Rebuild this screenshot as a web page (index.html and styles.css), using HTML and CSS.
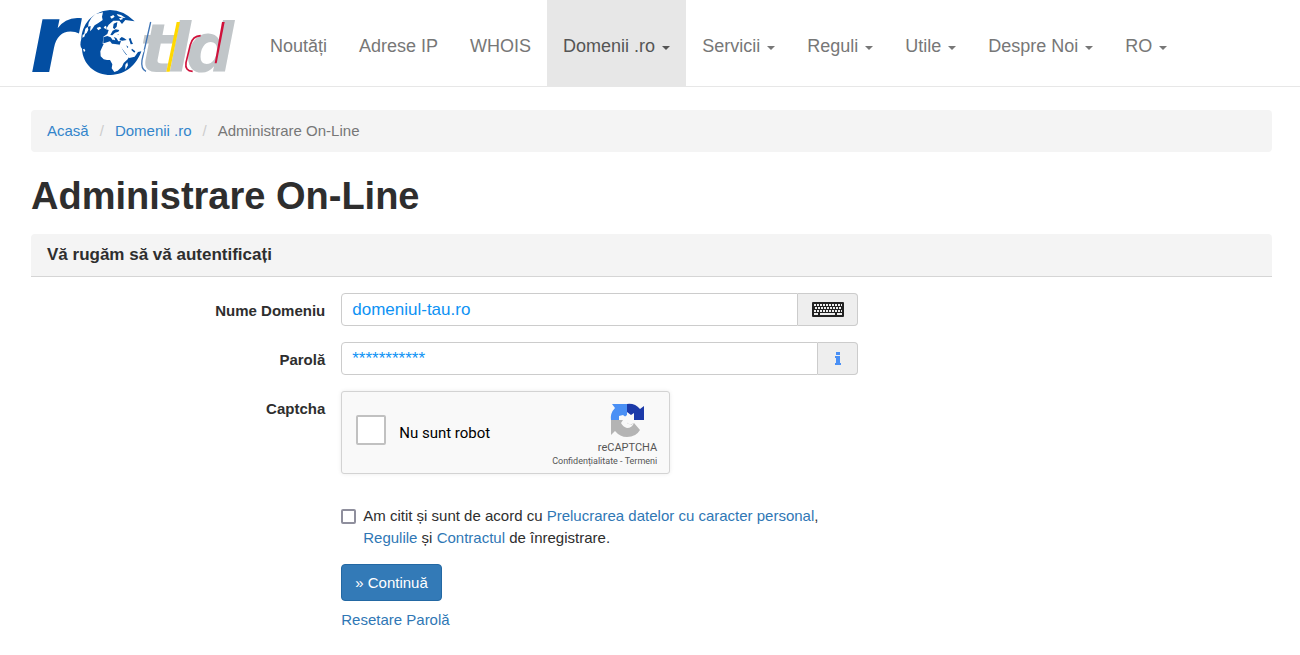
FILE: index.html
```html
<!DOCTYPE html>
<html lang="ro">
<head>
  <meta charset="UTF-8">
  <meta name="viewport" content="width=device-width, initial-scale=1">
  <title>Administrare On-Line</title>
  <link rel="stylesheet" href="styles.css">
</head>
<body>
  <nav class="navbar">
    <a class="brand" href="#" aria-label="rotld">
      <svg width="230" height="86" viewBox="0 0 690 258" aria-hidden="true">
        <g class="logo-text">
          <text x="28" y="215" font-size="290" fill="#034ea2">r</text>
          <text x="360 443 497" y="215" font-size="204" fill="#c1c6c9">tld</text>
        </g>
        <path d="M392 66L366 180Q362 208 378 214" fill="none" stroke="#3f74b5" stroke-width="4"/>
        <path d="M470 66h10l-31 149h-10z" fill="#ffd800"/>
        <path d="M542 107Q518 108 511 134L498 188Q494 213 518 214" fill="none" stroke="#d0103a" stroke-width="5"/>
        <path d="M606 66h8l-24 124h-6z" fill="#d0103a"/>
        <!-- globe -->
        <g transform="translate(174 18)">
          <path d="M96 12C40 16 12 58 10 98C6 112 6 122 12 128C14 176 52 207 98 207C144 206 174 176 190 142L176 152L158 132L166 118L188 106Q182 60 146 26Q122 12 96 12Z" fill="#fff" stroke="#fff" stroke-width="8"/>
          <path d="M96 12C40 16 12 58 10 98C6 112 6 122 12 128C14 176 52 207 98 207C144 206 176 176 190 136L180 138L170 152L154 156L140 138L124 118L94 112L74 114L76 92L88 84L92 72L84 70L92 56L106 44L124 44L132 54L142 42L170 46Q136 12 96 12Z" fill="#034ea2"/>
          <path d="M40 36L52 24L75 19L72 32L74 42L60 52L50 58L42 70L36 76L38 60L30 62L32 50ZM22 68l7-6l2 9l-5 10l-8 5ZM14 86l8-3l-3 9l-6 3ZM77 64l6-5l3 5l-4 6ZM56 66l10-4l4 5l-9 6Z" fill="#fff"/>
          <path d="M96 32l10-5l4 5l-9 6ZM116 24l13 3l14 9l-11-1l-12-5ZM123 37l9-2l3 4l-8 3Z" fill="#fff"/>
          <path d="M78 112L95 108L106 114L120 115L128 119L136 135L145 147L157 146L149 160L137 171L132 182L119 194L109 198L101 187L103 175L96 162L87 162L77 160L68 151L67 136L73 122Z" fill="#fff"/>
          <path d="M107 53L118 48L116 62L109 70L105 65ZM76 94l12-4l10 4l6 8l5-2l-2-7l8 3l6 10l8-1l-4 11l-13-2l-10-1l-6-7l-14 4l-6 2Z" fill="#034ea2"/>
          <path d="M104 74l9-4l11 2l-3 5l-10 3l-8 8l-6-1ZM125 98l6-5l7 3l8 6l-13 2l-8-1ZM152 98l6-2l3 10l4 8l-7 1l-3-9ZM145 118l6 5l-3 3ZM162 128l10 8l-3 4l-9-8ZM119 84l3 1l-2 3Z" fill="#034ea2"/>
          <path d="M104 92l5 3l3 8l-4-1l-5-6ZM142 176l6-7l2 9l-8 13ZM15 130l4-2l3 6l-4 4Z" fill="#fff"/>
        </g>
      </svg>
    </a>
    <ul class="menu">
      <li><a href="#">Noutăți</a></li>
      <li><a href="#">Adrese IP</a></li>
      <li><a href="#">WHOIS</a></li>
      <li><a class="active" href="#">Domenii .ro <span class="caret"></span></a></li>
      <li><a href="#">Servicii <span class="caret"></span></a></li>
      <li><a href="#">Reguli <span class="caret"></span></a></li>
      <li><a href="#">Utile <span class="caret"></span></a></li>
      <li><a href="#">Despre Noi <span class="caret"></span></a></li>
      <li><a href="#">RO <span class="caret"></span></a></li>
    </ul>
  </nav>

  <main class="container">
    <ol class="breadcrumb">
      <li><a href="#">Acasă</a></li>
      <li><a href="#">Domenii .ro</a></li>
      <li>Administrare On-Line</li>
    </ol>

    <h1>Administrare On-Line</h1>
    <h2>Vă rugăm să vă autentificați</h2>

    <form action="#" method="post">
      <div class="row">
        <label class="name" for="domain">Nume Domeniu</label>
        <div class="input-group">
          <input type="text" id="domain" name="domain" value="domeniul-tau.ro">
          <button class="addon addon-keyboard" type="button" aria-label="Tastatură">
            <svg width="32" height="15" viewBox="0 0 32 15" aria-hidden="true">
              <rect width="32" height="15" rx="1" fill="#222"/>
              <path d="M2 3h28M3 6h26M2 9h28" stroke="#eee" stroke-width="2" stroke-dasharray="2 1"/>
              <path d="M2 12h4M8 12h15M25 12h5" stroke="#eee" stroke-width="2"/>
            </svg>
          </button>
        </div>
      </div>

      <div class="row">
        <label class="name" for="password">Parolă</label>
        <div class="input-group">
          <input type="text" id="password" name="password" value="***********">
          <button class="addon addon-info" type="button" aria-label="Informații">
            <svg width="8" height="13" viewBox="0 0 8 13" aria-hidden="true">
              <path d="M2 0h4v3h-4zM1 4h5v7h1v2h-6v-2h1v-5h-1z" fill="#4a90f5"/>
            </svg>
          </button>
        </div>
      </div>

      <div class="row">
        <label class="name" for="robot">Captcha</label>
        <div class="captcha">
          <input type="checkbox" id="robot" name="robot">
          <label class="robot" for="robot">Nu sunt robot</label>
          <div class="captcha-brand">
            <svg width="34" height="34" viewBox="0 0 34 34" aria-hidden="true">
              <path d="M17 1V12L11 17H1Q0 10 5 5L2 1Z" fill="#4a90f5"/>
              <path d="M17 1Q25 0 30 6L34 3V17H20L17 12Z" fill="#1c3aa9"/>
              <path d="M1 17H14L20 22L24 20L30 27Q26 34 17 34Q10 34 5 28L1 32Z" fill="#b4b4b4"/>
              <path d="M9 13L13 12L17 15V9L21 12L24 10V17H20L17 20L21 22L24 20Q22 25 17 25Q13 24 11 20L13 17H9Z" fill="#f9f9f9"/>
            </svg>
            <span class="captcha-name">reCAPTCHA</span>
            <span class="captcha-links"><a href="#">Confidențialitate</a> - <a href="#">Termeni</a></span>
          </div>
        </div>
      </div>

      <div class="row">
        <div class="actions">
          <div class="terms">
            <input type="checkbox" id="terms" name="terms">
            <label for="terms">Am citit și sunt de acord cu <a href="#">Prelucrarea datelor cu caracter personal</a>, <a href="#">Regulile</a> și <a href="#">Contractul</a> de înregistrare.</label>
          </div>
          <button class="submit" type="submit">» Continuă</button>
          <a class="reset" href="#">Resetare Parolă</a>
        </div>
      </div>
    </form>
  </main>
</body>
</html>
```
FILE: styles.css
```css
* {
  box-sizing: border-box;
}
body {
  margin: 0;
  font-family: "Liberation Sans", Arial, sans-serif;
  font-size: 15px;
  line-height: 22px;
  color: #2e2e2e;
  background: #fff;
}
a {
  color: #2f77b5;
  text-decoration: none;
}
input, button {
  margin: 0;
  font-family: inherit;
}

/* navbar */
.navbar {
  display: flex;
  padding-left: 20px;
  border-bottom: 1px solid #e7e7e7;
}
.brand svg {
  display: block;
  overflow: visible;
}
.logo-text {
  font-family: "DejaVu Sans", sans-serif;
  font-style: italic;
  font-weight: bold;
}
.menu {
  display: flex;
  margin: 0;
  padding: 0 0 0 4px;
  list-style: none;
}
.menu a {
  display: flex;
  align-items: center;
  gap: 7px;
  height: 100%;
  padding: 6px 16px 0;
  font-size: 18px;
  color: #777;
}
.menu a.active {
  color: #555;
  background: #e7e7e7;
}
.caret {
  margin-top: 4px;
  border-top: 4px solid;
  border-left: 4px solid transparent;
  border-right: 4px solid transparent;
}

/* page */
.container {
  padding: 23px 28px 20px 31px;
}
.breadcrumb {
  display: flex;
  margin: 0;
  padding: 10px 16px;
  list-style: none;
  color: #777;
  background: #f4f4f4;
  border-radius: 4px;
}
.breadcrumb a {
  color: #3385cb;
}
.breadcrumb li + li::before {
  content: "/";
  padding: 0 11px;
  color: #ccc;
}
h1 {
  margin: 22px 0 16px;
  font-size: 38px;
  line-height: 44px;
}
h2 {
  margin: 0 0 16px;
  padding: 10px 16px;
  font-size: 17px;
  line-height: 22px;
  background: #f4f4f4;
  border-bottom: 1px solid #d5d5d5;
  border-radius: 4px 4px 0 0;
}

/* form */
.row {
  display: grid;
  grid-template-columns: 3fr 5fr 4fr;
  margin-bottom: 16px;
}
.name {
  padding: 7px 16px 0 0;
  font-weight: bold;
  text-align: right;
}
.input-group {
  display: flex;
  height: 33px;
}
.input-group input {
  flex: 1;
  min-width: 0;
  padding: 0 10px;
  font-size: 17px;
  color: #0d92f4;
  border: 1px solid #ccc;
  border-radius: 4px 0 0 4px;
}
.addon {
  display: flex;
  align-items: center;
  justify-content: center;
  padding: 0;
  background: #eee;
  border: 1px solid #ccc;
  border-left: 0;
  border-radius: 0 4px 4px 0;
}
.addon-keyboard {
  width: 60px;
}
.addon-info {
  width: 40px;
}
.captcha {
  display: flex;
  align-items: center;
  width: 329px;
  height: 83px;
  padding: 0 12px 0 14px;
  font-family: Roboto, sans-serif;
  color: #000;
  background: #f9f9f9;
  border: 1px solid #d3d3d3;
  border-radius: 3px;
  box-shadow: 0 0 4px rgba(0, 0, 0, 0.08);
}
input[type="checkbox"] {
  appearance: none;
  flex: none;
  background: #fff;
}
.captcha input {
  width: 30px;
  height: 30px;
  margin-bottom: 6px;
  border: 2px solid #c1c1c1;
  border-radius: 2px;
}
.robot {
  margin-left: 13px;
}
.captcha-brand {
  display: flex;
  flex-direction: column;
  align-items: flex-end;
  margin-left: auto;
  padding-top: 4px;
  color: #555;
}
.captcha-brand svg {
  margin-right: 13px;
}
.captcha-name {
  padding-top: 4px;
  font-size: 11px;
  line-height: 14px;
}
.captcha-links {
  font-size: 9px;
  line-height: 12px;
}
.captcha-links a {
  color: inherit;
}
.actions {
  grid-column: 2;
  display: flex;
  flex-direction: column;
  align-items: flex-start;
  padding-top: 15px;
}
.terms {
  display: flex;
  gap: 7px;
}
.terms input {
  width: 15px;
  height: 15px;
  margin-top: 4px;
  border: 2px solid #8f8f9d;
  border-radius: 2px;
}
.submit {
  height: 37px;
  margin: 15px 0 8px;
  padding: 0 13px;
  font-size: 15px;
  color: #fff;
  background: #337ab7;
  border: 1px solid #2368a3;
  border-radius: 4px;
}
```
